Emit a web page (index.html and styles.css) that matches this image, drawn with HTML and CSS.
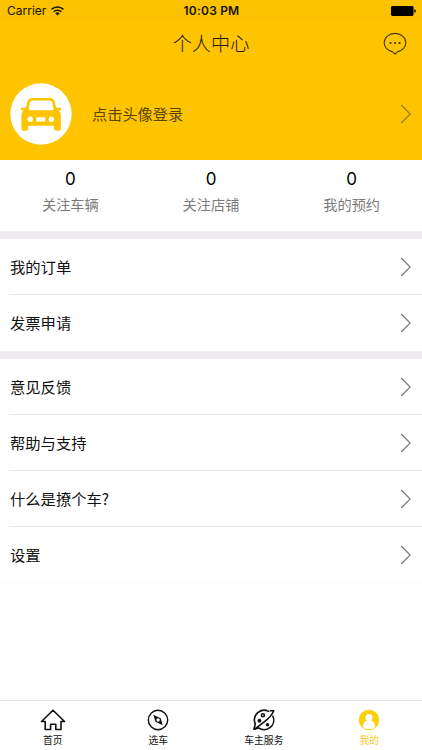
FILE: index.html
```html
<!DOCTYPE html>
<html lang="zh-CN">
<head>
<meta charset="utf-8">
<meta name="viewport" content="width=device-width, initial-scale=1">
<title>个人中心</title>
<link rel="stylesheet" href="styles.css">
</head>
<body>
<svg class="defs" aria-hidden="true">
  <symbol id="chevron" viewBox="0 0 12 20"><path d="M1.2 1 10.2 10 1.2 19" fill="none" stroke="currentColor" stroke-width="1.1"/></symbol>
</svg>
<div class="app">
  <div class="status">
    <div class="carrier"><span>Carrier</span>
      <svg class="wifi" viewBox="0 0 13 10"><g fill="none" stroke="#171200" stroke-width="1.5"><path d="M.6 3.4a8.500 8.500 0 0 1 11.8 0"/><path d="M2.7 5.8a5.500 5.500 0 0 1 7.600 0"/></g><path d="M4.300 7.400a3.200 3.200 0 0 1 4.400 0L6.500 9.600Z" fill="#171200"/></svg>
    </div>
    <div class="time">10:03 PM</div>
    <svg class="battery" viewBox="0 0 25 10"><rect width="22.500" height="10" rx="1.400"/><path d="M23.300 3.200q1.600.3 1.600 1.800t-1.600 1.800Z"/></svg>
  </div>
  <header class="nav">
    <h1>个人中心</h1>
    <svg class="chat" viewBox="0 0 24 24"><path d="M9.200 19.600C4.600 18.500 1.200 14.900 1.200 10.700 1.200 5.500 6 1.400 12 1.400s10.800 4.100 10.800 9.300c0 4.200-3.400 7.800-8 8.900L12 22.200Z" fill="none" stroke="#493900" stroke-width="1.100" stroke-linejoin="round"/><g fill="#3a2d00"><circle cx="7.500" cy="11" r="1.100"/><circle cx="12" cy="11" r="1.100"/><circle cx="16.500" cy="11" r="1.100"/></g></svg>
  </header>
  <section class="profile">
    <svg class="avatar" viewBox="0 0 62 62">
      <circle cx="31" cy="31" r="30.700" fill="#fff"/>
      <path fill="#ffc400" d="M22.500 15h17q4.200 0 5.200 3.800l1.500 6H51v2.500h-2.400q2.200 2 2.200 5.500v13q0 2-2 2h-2.500q-2.300 0-2.300-2.300V42.800H18.200v2.700q0 2.300-2.300 2.300h-2.500q-2 0-2-2v-13q0-3.500 2.200-5.500H11v-2.500h4.900l1.500-6Q18.400 15 22.500 15Z"/>
      <g fill="#fff"><path d="M22.800 17.500h16.600q2.300 0 2.800 2l1.300 5.600q.4 2.200-1.500 2.200H20.200q-1.900 0-1.500-2.200l1.300-5.600q.5-2 2.800-2Z"/><circle cx="20.300" cy="36.300" r="2.700"/><circle cx="41.400" cy="36.300" r="2.700"/><rect x="26.300" y="34.300" width="9" height="4.300" rx=".7"/></g>
    </svg>
    <span class="login">点击头像登录</span>
    <svg class="chevron"><use href="#chevron"/></svg>
  </section>
  <section class="stats">
    <div><b>0</b><span>关注车辆</span></div>
    <div><b>0</b><span>关注店铺</span></div>
    <div><b>0</b><span>我的预约</span></div>
  </section>
  <ul class="menu">
    <li><span>我的订单</span><svg class="chevron"><use href="#chevron"/></svg></li>
    <li><span>发票申请</span><svg class="chevron"><use href="#chevron"/></svg></li>
  </ul>
  <ul class="menu">
    <li><span>意见反馈</span><svg class="chevron"><use href="#chevron"/></svg></li>
    <li><span>帮助与支持</span><svg class="chevron"><use href="#chevron"/></svg></li>
    <li><span>什么是撩个车?</span><svg class="chevron"><use href="#chevron"/></svg></li>
    <li><span>设置</span><svg class="chevron"><use href="#chevron"/></svg></li>
  </ul>
  <nav class="tabs">
    <a><svg viewBox="0 0 26 22"><path d="M13 1.200 24.500 12.500H21V20.500H15.800V15.300H10.600V20.500H5.200V12.500H1.500Z" fill="none" stroke="#111" stroke-width="1.600" stroke-linejoin="round"/></svg><span>首页</span></a>
    <a><svg viewBox="0 0 26 22"><circle cx="13" cy="11" r="9.700" fill="none" stroke="#111" stroke-width="1.400"/><path d="M8.300 5.700 15.700 9.200 17.700 16.200 10.500 12.800Z" fill="#111"/><circle cx="13.100" cy="11" r="1.700" fill="#fff"/></svg><span>选车</span></a>
    <a><svg viewBox="0 0 26 22"><g fill="none" stroke="#111" stroke-width="1.600" stroke-linecap="round" stroke-linejoin="round"><path d="M17.600 2.400A9.600 9.600 0 0 0 4.300 14.800L3 20.300 7.600 18.900A9.600 9.600 0 0 0 21.900 7.200"/><path d="M19.300 1.700H22.800Q20.500 7 14.500 11.800 8.500 16.500 4 19.800"/><circle cx="11.900" cy="6.300" r="1.500"/></g><g fill="#111"><circle cx="8.500" cy="11.700" r="1.900"/><circle cx="16.600" cy="15.800" r="1.700"/></g></svg><span>车主服务</span></a>
    <a class="active"><svg viewBox="0 0 26 22"><circle cx="13" cy="11" r="10.300" fill="#f7d00d"/><circle cx="13" cy="8.500" r="3.500" fill="#fff"/><path d="M6.900 18.300c0-4 1.600-6 4.300-6.700h3.600c2.700.7 4.300 2.700 4.300 6.700-3 2.700-9.200 2.700-12.200 0Z" fill="#fff"/></svg><span>我的</span></a>
  </nav>
</div>
</body>
</html>
```
FILE: styles.css
```css
* { box-sizing: border-box; }
body { margin: 0; background: #fff; color: #111; font-family: "Noto Sans CJK SC", sans-serif; }
.defs { display: none; }
.app { display: flex; flex-direction: column; width: 100%; height: 750px; overflow: hidden; }
svg { display: block; flex: none; }

.status { display: grid; grid-template-columns: 1fr auto 1fr; align-items: center; height: 20px; padding: 2px 6px 0 7px; background: #fac200; color: #171200; font: 12px/18px Inter, sans-serif; }
.carrier { display: flex; align-items: center; gap: 5px; }
.wifi { width: 13px; height: 10px; }
.time { font-weight: 600; letter-spacing: .2px; }
.battery { width: 25px; height: 10px; justify-self: end; }

.nav { display: grid; grid-template-columns: 1fr auto 1fr; align-items: center; height: 48px; padding-right: 15px; padding-left: 15px; background: #ffc400; }
.nav h1 { grid-column: 2; margin: 0; padding-bottom: 2px; font-size: 19.200px; line-height: 28px; font-weight: 300; color: #1c1500; }
.chat { width: 24px; height: 24px; justify-self: end; }

.profile { display: flex; align-items: center; height: 92px; padding: 0 10px; background: #ffc400; }
.avatar { width: 62px; height: 62px; }
.login { margin-left: 20px; padding-bottom: 2px; color: #594500; font-size: 15.200px; line-height: 22px; }
.chevron { width: 12px; height: 20px; margin-left: auto; color: #777; }
.profile .chevron { color: #927a2c; }

.stats { display: grid; grid-template-columns: repeat(3, 1fr); height: 71px; }
.stats div { display: flex; flex-direction: column; align-items: center; padding-top: 8px; }
.stats b { font: 400 17px/23px Inter, sans-serif; color: #000; }
.stats span { margin-top: 3px; color: #7b7b7b; font-size: 14.200px; line-height: 21px; }

.menu { margin: 0; padding: 0; list-style: none; border-top: 8px solid #efeaed; }
.menu li { display: flex; align-items: center; height: 56px; margin-left: 10px; padding-right: 10px; border-bottom: 1px solid #e6e6e6; font-size: 15.300px; line-height: 22px; }
.menu span { padding-bottom: 2px; }
.menu li:last-child { border-bottom-color: transparent; }
.menu + .menu li:last-child { margin-left: 0; padding-left: 10px; border-bottom-color: #fafafa; }

.tabs { display: grid; grid-template-columns: repeat(4, 1fr); height: 50px; margin-top: auto; border-top: 1px solid #e5e5e5; }
.tabs a { display: flex; flex-direction: column; align-items: center; padding-top: 8px; font-size: 9.800px; line-height: 14px; }
.tabs svg { width: 26px; height: 22px; margin-bottom: 2px; }
.tabs .active { color: #f5ca2c; }
```
